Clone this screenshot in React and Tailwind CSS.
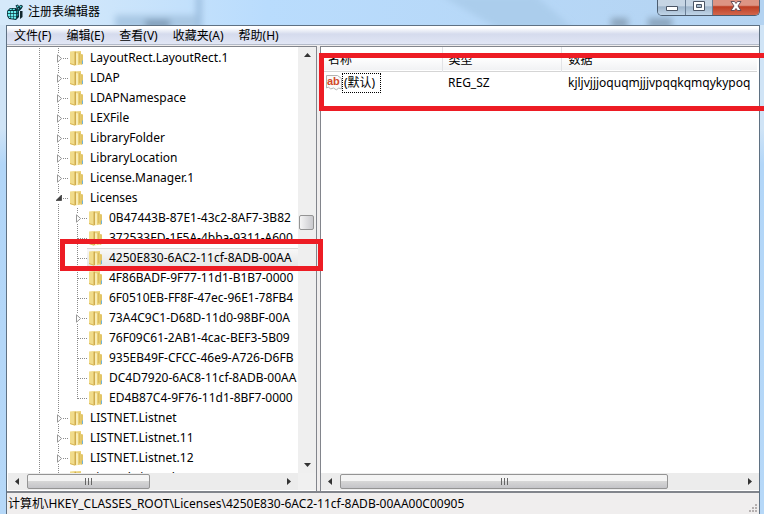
import React from "react";

const TREE = [
  { name: "LayoutRect.LayoutRect.1", open: false },
  { name: "LDAP", open: false },
  { name: "LDAPNamespace", open: false },
  { name: "LEXFile", open: false },
  { name: "LibraryFolder", open: false },
  { name: "LibraryLocation", open: false },
  { name: "License.Manager.1", open: false },
  { name: "Licenses", open: true },
  { name: "0B47443B-87E1-43c2-8AF7-3B82", child: true, expandable: true },
  { name: "372533ED-1F5A-4bba-9311-A600", child: true },
  { name: "4250E830-6AC2-11cf-8ADB-00AA", child: true, selected: true },
  { name: "4F86BADF-9F77-11d1-B1B7-0000", child: true },
  { name: "6F0510EB-FF8F-47ec-96E1-78FB4", child: true },
  { name: "73A4C9C1-D68D-11d0-98BF-00A", child: true, expandable: true },
  { name: "76F09C61-2AB1-4cac-BEF3-5B09", child: true },
  { name: "935EB49F-CFCC-46e9-A726-D6FB", child: true },
  { name: "DC4D7920-6AC8-11cf-8ADB-00AA", child: true },
  { name: "ED4B87C4-9F76-11d1-8BF7-0000", child: true, last: true },
  { name: "LISTNET.Listnet", open: false },
  { name: "LISTNET.Listnet.11", open: false },
  { name: "LISTNET.Listnet.12", open: false },
  { name: "ListPad.ListPad", open: false },
];

const MENUS = ["文件(F)", "编辑(E)", "查看(V)", "收藏夹(A)", "帮助(H)"];

const RegeditIcon = () => (
  <svg className="size-4 shrink-0" viewBox="0 0 16 16">
    <path d="M0 7l3-3h6l3 2v7l-3 3-7-1-2-3z" fill="#0a2f38" />
    <path d="M3.300 4.800h2L4.300 6H2.200zM6.300 4.800h2L7.500 6H5.300zM.8 7h2.500v2.300H.8zM3.900 7h2.400v2.300H3.900zM6.900 7h2.300v2.300H6.900zM.8 9.900h2.500v2.300H.8zM3.900 9.900h2.400v2.300H3.900zM6.900 9.900h2.300v2.300H6.900zM2 12.800h1.500V14H2zM4.100 12.800h2.200v1.700H4.100zM6.900 12.800h2.200v1.900H6.900z" fill="#6aeded" />
    <path d="M10 7l1.300-.8v2L10 9zM10 10l1.300-.8v2L10 12z" fill="#178a92" />
    <path d="M8.500 1.500l2.200-1L12 2l2-1.200L16 2l-1.200 2.500L12.500 7 9.800 4.500z" fill="#0a2f38" />
    <path d="M9.500 2l1.200-.6.8 1.200-1 .8zM12.500 2.600l1.400-.9.9.7-1.300 1.400zM11.300 4l1 .9-.6.6-1-.9z" fill="#4fd6d8" />
    <path d="M13 7h2.500v6L13 15z" fill="#10272e" />
  </svg>
);

const Folder = () => (
  <svg className="h-4 w-[14px] shrink-0" viewBox="0 0 14 16">
    <path d="M4 1.500L11 1v12H4z" fill="#ead27c" />
    <path d="M11 4l2 .5V14l-2 1z" fill="#e3c566" />
    <path d="M0 1.500L4.500 1 6 2v13l-1.500.5L0 14z" fill="#f1dc8b" />
    <path d="M4.500 2L6 1.500V15l-1.500.5z" fill="#cfab4e" />
    <path d="M6 3l2 .5V15l-2 .5z" fill="#f8ecb4" />
    <path d="M8 2.500l3-.5v12.500L8 15z" fill="#e9cf74" />
    <path d="M9.200 3h1v10h-1z" fill="#d8b85c" />
    <path d="M0 13l4.500 1.500v1L0 14z" fill="#d9b657" />
    <path d="M12 10.500h1V14h-1z" fill="#6fb3dc" />
  </svg>
);

const Expander = ({ open }) => (
  <svg className="absolute top-[6px] left-[7px] h-[9px] w-[7px] bg-white" viewBox="0 0 7 9">
    {open ? (
      <path d="M5.500 1v5.500H0z" fill="#404040" stroke="#262626" strokeWidth=".6" />
    ) : (
      <path d="M1.500 .8v7.400L5.600 4.500z" fill="#fff" stroke="#989898" />
    )}
  </svg>
);

const Guide = ({ last }) => (
  <svg className="absolute inset-0 h-5 w-[19px]" viewBox="0 0 19 20" shapeRendering="crispEdges">
    <path d={last ? "M9.5 0v11" : "M9.5 0v20"} stroke="#8a8a8a" strokeDasharray="1 1" />
    <path d="M10 10.5h9" stroke="#8a8a8a" strokeDasharray="1 1" />
  </svg>
);

const Rail = () => (
  <svg className="h-5 w-[19px] shrink-0" viewBox="0 0 19 20" shapeRendering="crispEdges">
    <path d="M9.5 0v20" stroke="#8a8a8a" strokeDasharray="1 1" />
  </svg>
);

const TreeRow = ({ item }) => (
  <li className="flex h-5 items-center pl-[23px]">
    <Rail />
    {item.child && <Rail />}
    <span className="relative h-5 w-[19px] shrink-0">
      <Guide last={item.last} />
      {(!item.child || item.expandable) && <Expander open={item.open} />}
    </span>
    <span
      className={`flex h-5 min-w-0 flex-1 items-center gap-[6px] border-y pl-[2px] ${
        item.selected ? "border-[#d9d9d9] bg-linear-to-b from-[#f8f8f8] to-[#e5e5e5]" : "border-transparent"
      }`}
    >
      <Folder />
      <span className="whitespace-nowrap">{item.name}</span>
    </span>
  </li>
);

const Arrow = ({ d }) => (
  <svg className="size-[7px]" viewBox="0 0 7 7">
    <path d={d} fill="#333" />
  </svg>
);

const LEFT = "M5 0v7L1 3.5z";
const RIGHT = "M2 0v7l4-3.5z";
const UP = "M0 5h7L3.5 1z";
const DOWN = "M0 2h7L3.5 6z";

const HScroll = ({ thumb }) => (
  <div className="flex h-[17px] min-w-0 flex-1 bg-[#ececec]">
    <button aria-label="Scroll left" className="flex w-[19px] shrink-0 items-center justify-center">
      <Arrow d={LEFT} />
    </button>
    <div className="flex min-w-0 flex-1 py-px">
      <div className={`flex items-center justify-center gap-[2px] rounded-xs border border-[#949494] bg-linear-to-b from-[#f4f4f4] from-45% via-[#d6d6d6] via-50% to-[#c4c4c8] ${thumb}`}>
        <i className="h-[7px] w-px bg-[#666]" />
        <i className="h-[7px] w-px bg-[#666]" />
        <i className="h-[7px] w-px bg-[#666]" />
      </div>
    </div>
    <button aria-label="Scroll right" className="flex w-[19px] shrink-0 items-center justify-center">
      <Arrow d={RIGHT} />
    </button>
  </div>
);

const VScroll = () => (
  <div className="flex w-[18px] shrink-0 flex-col bg-[#efefef]">
    <button aria-label="Scroll up" className="flex h-[17px] shrink-0 items-center justify-center">
      <Arrow d={UP} />
    </button>
    <div className="flex flex-1 flex-col pr-[2px] pl-px">
      <div className="grow-[152]" />
      <div className="h-[15px] rounded-xs border border-[#949494] bg-linear-to-r from-[#f5f5f5] to-[#c9c9cd]" />
      <div className="grow-[227]" />
    </div>
    <button aria-label="Scroll down" className="flex h-[17px] shrink-0 items-center justify-center">
      <Arrow d={DOWN} />
    </button>
  </div>
);

// desktop shapes showing through the glass frame
const GlassBackdrop = () => (
  <svg className="absolute inset-0 h-full w-full" viewBox="0 0 764 25" preserveAspectRatio="none">
    <defs>
      <filter id="soft" x="-50%" y="-50%" width="200%" height="200%">
        <feGaussianBlur stdDeviation="3" />
      </filter>
    </defs>
    <g filter="url(#soft)">
      <path d="M115 15h85v14h-85z" fill="#a9c8e4" />
      <path d="M145 20h25v8h-25z" fill="#7d9ab5" />
      <path d="M196 -5h6v35h-6z" fill="#9dbfe0" />
      <path d="M440 -5l60 35h75L535 -5z" fill="#abcdec" />
      <path d="M611 18h17v10h-17zM648 18h24v10h-24z" fill="#8ba5bd" />
    </g>
  </svg>
);

const TitleBar = () => (
  <header className="relative flex h-[25px] shrink-0 justify-between bg-linear-to-r from-[#d5e9fa] from-5% via-[#b9dcfd] via-35% to-[#b4d3f1]">
    <GlassBackdrop />
    <div className="relative flex h-[23px] items-center gap-[5px] pl-[7px]">
      <RegeditIcon />
      <h1 className="text-[12px]">注册表编辑器</h1>
    </div>
    <div className="relative mr-1 flex h-4 overflow-hidden rounded-b-[5px] border border-t-0 border-[#4c5d70]">
      <button aria-label="Minimize" className="flex w-7 items-center justify-center border-r border-[#6b7f96] bg-linear-to-b from-[#c6d5e4] from-40% via-[#9fb5cb] via-45% to-[#c0d5e8]">
        <svg className="h-[15px] w-3" viewBox="0 0 12 15">
          <path d="M.5 6.500h11v4H.5z" fill="#fff" stroke="#4b5565" />
        </svg>
      </button>
      <button aria-label="Maximize" className="flex w-[27px] items-center justify-center border-r border-[#6b7f96] bg-linear-to-b from-[#c6d5e4] from-40% via-[#9fb5cb] via-45% to-[#c0d5e8]">
        <svg className="h-[15px] w-3" viewBox="0 0 12 15">
          <path d="M.5 1.500h11v9H.5z" fill="#fff" stroke="#4b5565" />
          <path d="M3.500 4.500h5v3h-5z" fill="#a9bdd0" stroke="#4b5565" />
        </svg>
      </button>
      <button aria-label="Close" className="flex w-[46px] items-center justify-center bg-linear-to-b from-[#dd9484] from-35% via-[#bd3d23] via-45% to-[#d2664c]">
        <svg className="h-[15px] w-3" viewBox="0 0 12 15">
          <path d="M1 1.500h3.500L6 3.500l1.500-2H11L8 6l3 4.500H7.500L6 8.500l-1.500 2H1L4 6z" fill="#fff" stroke="#5b4450" strokeWidth=".9" />
        </svg>
      </button>
    </div>
  </header>
);

const ValueList = () => (
  <table className="w-full table-fixed border-collapse text-left">
    <thead>
      <tr className="h-6 border-b border-[#d5d5d5] bg-linear-to-b from-white from-45% to-[#f1f2f4]">
        <th className="w-[121px] border-r border-[#e2e3e6] pt-[3px] pl-[7px] font-normal">名称</th>
        <th className="w-[119px] border-r border-[#e2e3e6] pt-[3px] pl-[6px] font-normal">类型</th>
        <th className="pt-[3px] pl-[7px] font-normal">数据</th>
      </tr>
    </thead>
    <tbody>
      <tr className="h-[23px]">
        <td className="pl-[5px]">
          <div className="flex items-center">
            <svg className="h-4 w-4" viewBox="0 0 16 16">
              <path d="M.5 .5h11l4 3V14l-3-1-2 2-3-2-3 1-2-2-2 1z" fill="#fafafa" stroke="#b3b3b3" />
              <text x="1" y="10" fontFamily="Liberation Sans" fontSize="11" fontWeight="bold" fill="#d2492a">ab</text>
            </svg>
            <span className="flex h-5 items-center border border-dotted border-black px-px pr-[5px]">(默认)</span>
          </div>
        </td>
        <td className="pl-[6px]">REG_SZ</td>
        <td className="overflow-hidden pl-[7px] whitespace-nowrap">kjljvjjjoquqmjjjvpqqkqmqykypoq</td>
      </tr>
    </tbody>
  </table>
);

export default function App() {
  return (
    <div className="relative flex h-screen flex-col overflow-hidden bg-linear-to-b from-[#d0e4f6] from-25% via-[#b2d6f8] via-32% to-[#b6d8f8] font-['Noto_Sans','Noto_Sans_CJK_SC',sans-serif] text-[12px] leading-4 text-black">
      <TitleBar />

      <div className="mr-1 ml-[6px] flex min-h-0 flex-1 flex-col border-x border-t border-[#5f7183] bg-[#f0eeee]">
        <nav className="flex h-[19px] shrink-0 items-center gap-[15px] border-b border-[#b4bbc9] bg-linear-to-b from-white from-10% via-[#d5dbed] via-45% to-[#e1e6f5] pt-[2px] pl-[7px]">
          {MENUS.map((menu) => (
            <button key={menu}>{menu}</button>
          ))}
        </nav>

        <main className="mt-px flex min-h-0 flex-1">
          <section className="flex w-[310px] shrink-0 flex-col border-t border-r border-[#82858c] bg-white">
            <div className="flex min-h-0 flex-1">
              <ul className="min-w-0 flex-1 overflow-hidden pt-px">
                {TREE.map((item) => (
                  <TreeRow key={item.name} item={item} />
                ))}
              </ul>
              <VScroll />
            </div>
            <div className="flex pb-px pl-px">
              <HScroll thumb="w-[123px]" />
              <div className="w-[18px] bg-[#f0f0f0]" />
            </div>
          </section>

          <section className="ml-[3px] flex min-w-0 flex-1 flex-col border-t border-l border-[#82858c] bg-white">
            <div className="min-h-0 flex-1 overflow-hidden pr-[2px]">
              <ValueList />
            </div>
            <div className="flex pb-px">
              <HScroll thumb="w-[82%]" />
            </div>
          </section>
        </main>

        <footer className="flex h-[23px] shrink-0 items-center justify-between border-t-2 border-[#82858c] pl-px">
          <span className="whitespace-nowrap">计算机\HKEY_CLASSES_ROOT\Licenses\4250E830-6AC2-11cf-8ADB-00AA00C00905</span>
          <svg className="size-3 self-end" viewBox="0 0 12 12" fill="#b5b0b0">
            <path d="M8 2h2v2H8zM5 5h2v2H5zM8 5h2v2H8zM2 8h2v2H2zM5 8h2v2H5zM8 8h2v2H8z" />
          </svg>
        </footer>
      </div>

      <div className="pointer-events-none absolute top-[239px] left-[60px] h-8 w-[263px] border-[5px] border-[#ed1c24]" />
      <div className="pointer-events-none absolute top-[53px] right-0 left-[319px] h-[58px] border-[5px] border-r-0 border-[#ed1c24]" />
    </div>
  );
}
